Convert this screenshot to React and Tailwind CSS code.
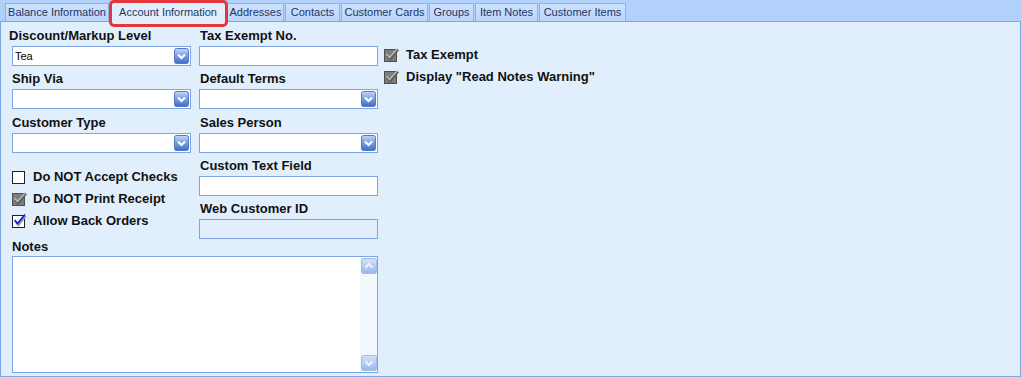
import React from "react";

const tabs = [
  { name: "Balance Information", w: "w-[104px]" },
  { name: "Account Information", w: "w-[116px]", active: true },
  { name: "Addresses", w: "w-[57px]" },
  { name: "Contacts", w: "w-[55px]" },
  { name: "Customer Cards", w: "w-[87px]" },
  { name: "Groups", w: "w-[45px]" },
  { name: "Item Notes", w: "w-[63px]" },
  { name: "Customer Items", w: "w-[87px]" },
];

const DropButton = () => (
  <svg width="15" height="16" viewBox="0 0 15 16" className="shrink-0">
    <defs>
      <linearGradient id="dd" x1="0" y1="0" x2="0" y2="1">
        <stop offset="0" stopColor="#c3d8f8" />
        <stop offset="0.45" stopColor="#7fa3e4" />
        <stop offset="1" stopColor="#3f6cc4" />
      </linearGradient>
    </defs>
    <rect x="0.5" y="0.5" width="14" height="15" rx="2" fill="url(#dd)" stroke="#5379c0" />
    <path d="M4 6.5 L7.5 10 L11 6.5" fill="none" stroke="#fff" strokeWidth="2" />
  </svg>
);

const ScrollButton = ({ up }) => (
  <svg width="16" height="16" viewBox="0 0 16 16">
    <defs>
      <linearGradient id="sb" x1="0" y1="0" x2="0" y2="1">
        <stop offset="0" stopColor="#d3e3fa" />
        <stop offset="1" stopColor="#97b7ea" />
      </linearGradient>
    </defs>
    <rect x="0.5" y="0.5" width="15" height="15" rx="2" fill="url(#sb)" stroke="#9fbbe6" />
    <path
      d={up ? "M4.5 9.5 L8 6 L11.5 9.5" : "M4.5 6.5 L8 10 L11.5 6.5"}
      fill="none"
      stroke="#eef4fd"
      strokeWidth="2"
    />
  </svg>
);

const CheckBox = ({ state }) => {
  if (state === "off")
    return (
      <svg width="13" height="13" viewBox="0 0 13 13" className="shrink-0">
        <rect x="0.5" y="0.5" width="12" height="12" fill="#fff" stroke="#222" />
      </svg>
    );
  if (state === "grey")
    return (
      <svg width="15" height="14" viewBox="0 0 15 14" className="shrink-0 overflow-visible">
        <rect x="0.5" y="1.5" width="12" height="12" fill="#7d7d7d" stroke="#4f4f4f" />
        <path d="M3 7.5 L6 11 L14 1.5" fill="none" stroke="#5a5a5a" strokeWidth="2.6" />
        <path d="M2.5 6 L5.5 9.5 L13.5 0.5" fill="none" stroke="#b8b8b8" strokeWidth="1.5" />
      </svg>
    );
  return (
    <svg width="15" height="14" viewBox="0 0 15 14" className="shrink-0 overflow-visible">
      <rect x="0.5" y="1.5" width="12" height="12" fill="#fff" stroke="#222" />
      <path d="M3.5 7.5 L6.5 11 L13.5 2" fill="none" stroke="#9a9a9a" strokeWidth="2.2" />
      <path d="M2.5 6 L5.5 9.5 L13 0.5" fill="none" stroke="#1414e6" strokeWidth="1.6" />
    </svg>
  );
};

const Label = ({ children, className = "" }) => (
  <div className={`h-[14px] leading-[14px] text-[13px] font-bold text-[#111] whitespace-nowrap ${className}`}>
    {children}
  </div>
);

const Select = ({ value }) => (
  <div className="mt-[3px] h-[20px] w-[179px] border border-[#7fa6e3] bg-white flex items-center justify-between pl-[2px] pr-[1px]">
    <span className="text-[11px] text-black">{value}</span>
    <DropButton />
  </div>
);

const Input = ({ disabled }) => (
  <div
    className={`mt-[3px] h-[20px] w-[179px] border border-[#7fa6e3] ${
      disabled ? "bg-[#e1effd]" : "bg-white"
    }`}
  />
);

const CheckRow = ({ state, text, gap = "gap-[8px]" }) => (
  <div className={`h-[22px] flex items-center ${gap}`}>
    <CheckBox state={state} />
    <span className="text-[13px] font-bold text-[#111] whitespace-nowrap">{text}</span>
  </div>
);

export default function App() {
  return (
    <div
      className="w-[1021px] h-[377px] bg-[#b1d0fc] flex flex-col relative overflow-hidden"
      style={{ fontFamily: '"Liberation Sans", Arial, sans-serif' }}
    >
      {/* tab strip */}
      <div className="h-[21px] flex items-end gap-[1px] pl-[5px] shrink-0">
        {tabs.map((t) =>
          t.active ? (
            <div
              key={t.name}
              className={`${t.w} h-[21px] -mb-[1px] relative z-10 bg-[#e1effd] border border-b-0 border-[#8bb0e6] flex items-center justify-center text-[11px] text-[#1c3766]`}
            >
              {t.name}
            </div>
          ) : (
            <div
              key={t.name}
              className={`${t.w} h-[18px] bg-gradient-to-b from-[#cde1fd] to-[#bcd5fb] border border-b-0 border-[#8db2e8] flex items-center justify-center text-[11px] text-[#1c3766]`}
            >
              {t.name}
            </div>
          )
        )}
      </div>

      {/* red highlight around the selected tab */}
      <div className="absolute left-[109px] top-0 w-[119px] h-[27px] border-[3px] border-[#e4373d] rounded-[5px] z-20" />

      {/* panel */}
      <div className="flex-1 bg-[#e1effd] border border-[#7fa7e2] flex pl-[11px] pt-[7px]">
        <div className="flex flex-col">
          <div className="flex gap-[8px]">
            {/* column 1 */}
            <div className="flex flex-col w-[179px]">
              <Label className="-ml-[3px]">Discount/Markup Level</Label>
              <Select value="Tea" />
              <Label className="mt-[6px]">Ship Via</Label>
              <Select />
              <Label className="mt-[7px]">Customer Type</Label>
              <Select />
              <div className="mt-[13px] flex flex-col">
                <CheckRow state="off" text="Do NOT Accept Checks" />
                <CheckRow state="grey" text="Do NOT Print Receipt" gap="gap-[6px]" />
                <CheckRow state="blue" text="Allow Back Orders" gap="gap-[6px]" />
              </div>
            </div>

            {/* column 2 */}
            <div className="flex flex-col w-[179px]">
              <Label className="pl-[1px]">Tax Exempt No.</Label>
              <Input />
              <Label className="mt-[6px] pl-[1px]">Default Terms</Label>
              <Select />
              <Label className="mt-[7px] pl-[1px]">Sales Person</Label>
              <Select />
              <Label className="mt-[6px] pl-[1px]">Custom Text Field</Label>
              <Input />
              <Label className="mt-[6px] pl-[1px]">Web Customer ID</Label>
              <Input disabled />
            </div>
          </div>

          <Label className="mt-[1px]">Notes</Label>
          <div className="mt-[2px] w-[366px] h-[117px] border border-[#7fa6e3] bg-white flex justify-end">
            <div className="w-[17px] bg-[#f3f8fe] flex flex-col justify-between items-center py-[1px]">
              <ScrollButton up />
              <ScrollButton />
            </div>
          </div>
        </div>

        {/* column 3 */}
        <div className="ml-[6px] pt-[15px] flex flex-col">
          <CheckRow state="grey" text="Tax Exempt" gap="gap-[7px]" />
          <CheckRow state="grey" text={'Display "Read Notes Warning"'} gap="gap-[7px]" />
        </div>
      </div>
    </div>
  );
}
